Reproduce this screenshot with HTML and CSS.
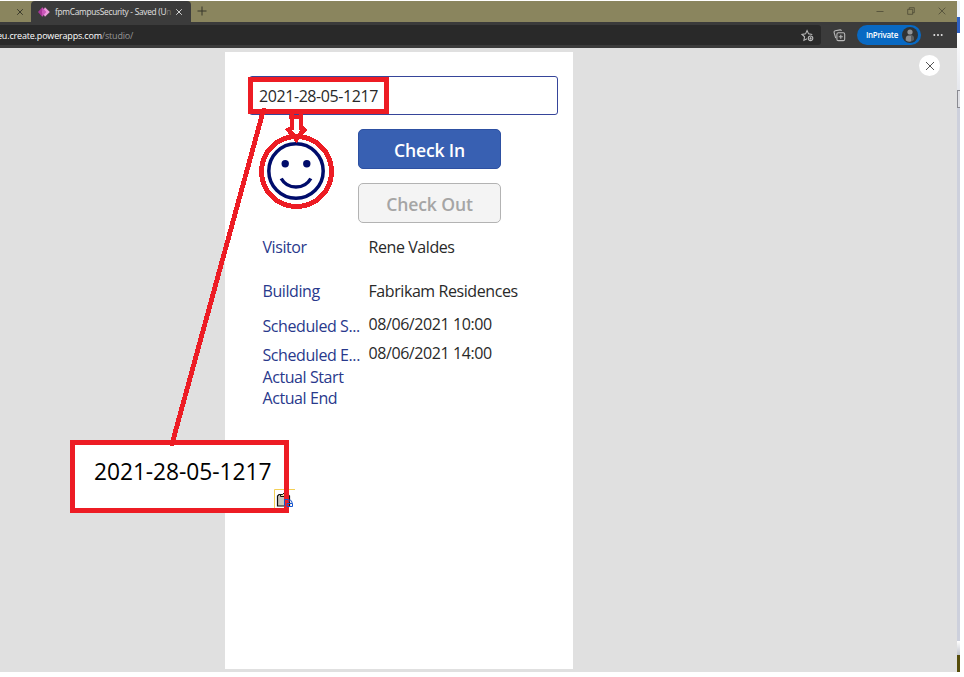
FILE: index.html
```html
<!DOCTYPE html>
<html lang="en">
<head>
<meta charset="utf-8">
<title>fpmCampusSecurity</title>
<link rel="stylesheet" href="styles.css">
</head>
<body>
<div class="desktop">
  <main class="browser">
    <header class="tabs">
      <div class="tab-rest"><svg class="x-small" viewBox="0 0 8 8"><path d="M1.2 1.2l5.6 5.6M6.8 1.2L1.2 6.8"/></svg></div>
      <div class="tab">
        <svg class="logo" viewBox="0 0 12 12"><path fill="#a83598" d="M4.2 1.2L0 6l4.2 4.8L7 6z"/><path fill="#ee9bdc" d="M7 1.2L11.8 6 7 10.8 4.2 6z"/><path fill="#cb58bb" d="M4.2 1.2L8.4 6l-4.2 4.8z"/></svg>
        <span class="tab-title">fpmCampusSecurity - Saved (U<i>n</i></span>
        <svg class="x-small light" viewBox="0 0 8 8"><path d="M1.2 1.2l5.6 5.6M6.8 1.2L1.2 6.8"/></svg>
      </div>
      <svg class="plus" viewBox="0 0 10 10"><path d="M5 .5v9M.5 5h9"/></svg>
      <div class="window-buttons">
        <svg viewBox="0 0 8 8"><path d="M.5 4.5h7"/></svg>
        <svg viewBox="0 0 8 8"><path d="M.7 2.3h5v5h-5zM2.3 2.3V.7h5v5H5.7"/></svg>
        <svg viewBox="0 0 8 8"><path d="M.7.7l6.6 6.6M7.3.7L.7 7.3"/></svg>
      </div>
    </header>
    <div class="toolbar">
      <div class="address">
        <span class="url"><b>eu.create.powerapps.com</b>/studio/</span>
        <svg class="star" viewBox="0 0 12 12"><path d="M5.6 9L2.7 10.5l.6-3.3L1 5l3.2-.5L5.6 1.4 7 4.5l3.4.5"/><circle cx="8.8" cy="8.6" r="2.1"/><path d="M8.8 7.5v2.2M7.7 8.6h2.2"/></svg>
      </div>
      <svg class="collections" viewBox="0 0 12 12"><path d="M2.5 8.5L1 3.2Q.8 2 2 1.7L6.6.8q1-.1 1.2 1"/><rect x="3.6" y="3.5" width="7.2" height="7.2" rx="1.3"/><path d="M7.2 5.2v3.8M5.3 7.1h3.8"/></svg>
      <div class="private"><span>InPrivate</span><svg viewBox="0 0 16 16"><circle cx="8" cy="8" r="8" fill="#303335"/><circle cx="8" cy="5" r="2.6" fill="#929496"/><path fill="#898b8d" d="M3.8 13.4Q3.2 8.8 6.4 8.6h3.2q3 0 2.3 4.4Q8 16.2 3.8 13.4z"/><path fill="#303335" d="M9 9h4v6H9z" opacity=".5"/></svg></div>
      <svg class="more" viewBox="0 0 10 4"><circle cx="1.3" cy="2" r="1"/><circle cx="5" cy="2" r="1"/><circle cx="8.7" cy="2" r="1"/></svg>
    </div>
    <div class="studio">
      <section class="phone">
        <div class="code">2021-28-05-1217</div>
        <div class="actions">
          <svg class="smile" viewBox="0 0 60 60"><circle cx="30" cy="30" r="27.2"/><path d="M15.2 37.5Q20 46 30 46t14.8-8.5"/><circle class="eye" cx="19.2" cy="22.8" r="3.7"/><circle class="eye" cx="40.8" cy="22.8" r="3.7"/></svg>
          <div class="buttons"><button class="check-in">Check In</button><button class="check-out" disabled>Check Out</button></div>
        </div>
        <dl class="details">
          <dt>Visitor</dt><dd>Rene Valdes</dd>
          <dt>Building</dt><dd>Fabrikam Residences</dd>
          <dt>Scheduled S...</dt><dd class="date">08/06/2021 10:00</dd>
          <dt>Scheduled E...</dt><dd class="date">08/06/2021 14:00</dd>
          <dt>Actual Start</dt><dd></dd>
          <dt>Actual End</dt><dd></dd>
        </dl>
      </section>
      <div class="close"><svg viewBox="0 0 10 10"><path d="M1 1l8 8M9 1L1 9"/></svg></div>
    </div>
  </main>
  <aside class="edge"><i class="e1"></i><i class="e2"></i><i class="e3"></i><i class="e4"></i><i class="e5"></i><i class="e6"></i><i class="e7"></i></aside>
</div>
<div class="callout"><span>2021-28-05-1217</span></div>
<svg class="notes" viewBox="0 0 964 677">
  <path d="M274.5 508V489.500H295" fill="none" stroke="#f3cf55"/>
  <path d="M275 490h19v18h-19z" fill="#fff"/>
  <path d="M279 494.500h9l1.500 1.500v10h-12V496z" fill="#cbc7ba" stroke="#111" stroke-width="1.2"/>
  <path d="M280.500 496.500v-2h2l1.500-1.500 1.500 1.500h2v2z" fill="#eee5a5" stroke="#111"/>
  <g fill="none" stroke="#ed1c24" stroke-width="5" shape-rendering="crispEdges">
    <path d="M250.500 79.500h136v32h-136z"/>
    <circle cx="296.500" cy="171.500" r="35" stroke-width="5"/>
    <path d="M263.500 110L172 444" stroke-width="4.800" stroke-linecap="round"/>
    <path d="M72.500 442.500h214v68h-214z"/>
    <path d="M291.500 113v17M300.500 113v17M289 116.500h14" stroke-width="4"/>
    <path d="M287 128l9.500 11 9-11" stroke-width="5"/>
  </g>
  <path d="M284.500 506V499.500h4M289 502v-2h1.500l1.500 2v1.500M287 503.500h5.500v3H287z" fill="none" stroke="#1555d0"/>
</svg>
</body>
</html>
```
FILE: styles.css
```css
* { box-sizing: border-box; }
body { margin: 0; width: 964px; height: 677px; overflow: hidden; background: #fff; font-family: "Open Sans", sans-serif; }
svg { display: block; flex: none; }
.desktop { display: flex; width: 960px; height: 672px; padding-top: 1px; }
.browser { width: 957px; height: 671px; }
.tabs { display: flex; height: 21px; background: #8a855e; }
.tab-rest { width: 31px; padding: 7px 0 0 16px; }
.x-small { width: 8px; height: 8px; fill: none; stroke: #3c3b2c; }
.x-small.light { stroke: #d2d2d2; margin-left: 5px; }
.tab { display: flex; align-items: center; width: 160px; background: #3b3b3b; border-radius: 4px 4px 0 0; padding-left: 7px; }
.logo { width: 12px; height: 12px; }
.tab-title { width: 115px; margin-left: 5px; font-size: 8.3px; letter-spacing: -.27px; line-height: 20px; white-space: nowrap; color: #e2e2e2; }
.tab-title i { font-style: normal; color: #777; }
.plus { width: 10px; height: 10px; margin: 5px 0 0 6px; stroke: #37372b; }
.window-buttons { display: flex; gap: 23px; margin: 6px 11px 0 auto; }
.window-buttons svg { width: 8px; height: 8px; fill: none; stroke: #4c4a36; stroke-width: .8; }
.toolbar { display: flex; align-items: center; height: 26px; background: #3b3b3b; color: #fff; }
.address { display: flex; align-items: center; justify-content: space-between; width: 821px; height: 20px; padding-right: 7px; background: #292929; border-radius: 0 3px 3px 0; font-size: 9px; color: #969696; }
.url { margin-left: -3px; letter-spacing: -.18px; }
.address b { font-weight: 400; color: #fff; }
.star, .collections { width: 13px; height: 13px; fill: none; stroke: #b9b9b9; stroke-width: 1; }
.collections { margin-left: 12px; }
.private { display: flex; align-items: center; justify-content: flex-end; gap: 4px; width: 64px; height: 20px; margin-left: 11px; padding-right: 3px; background: #0869c3; border-radius: 10px; font-size: 8px; font-weight: 600; letter-spacing: -.3px; line-height: 10px; white-space: nowrap; }
.private span { margin-bottom: 1px; }
.private svg { width: 16px; height: 16px; }
.more { width: 10px; height: 4px; margin-left: 12px; fill: #e5e5e5; }
.studio { display: flex; height: 624px; padding: 4px 17px 3px 225px; background: #e0e0e0; justify-content: space-between; }
.phone { width: 348px; height: 617px; background: #fff; padding: 24px 15px 0 24px; }
.code { width: 309px; height: 39px; border: 1.5px solid #36459a; border-radius: 3px; padding-left: 9px; font-size: 16px; letter-spacing: -.42px; line-height: 38px; color: #292929; }
.actions { display: flex; margin-top: 14px; }
.smile { width: 60px; height: 60px; margin: 12px 0 0 17px; fill: none; stroke: #000c6b; stroke-width: 3.5; }
.smile .eye { fill: #000c6b; stroke: none; }
.buttons { display: flex; flex-direction: column; gap: 14px; margin-left: 32px; }
button { width: 143px; height: 40px; padding: 1px 0 0; border: 1px solid #2d50a2; border-radius: 5px; background: #3860b2; font: 600 17.6px "Open Sans", sans-serif; letter-spacing: -.15px; color: #fff; }
.check-out { border-color: #b3b3b3; background: #f4f4f4; color: #a5a5a5; }
.details { display: grid; grid-template-columns: 106px 150px; grid-template-rows: 44px 35px 29px 21.5px 21.5px 21px; margin: 12px 0 0 13.5px; font-size: 16px; letter-spacing: -.42px; line-height: 24px; white-space: nowrap; }
dt { color: #29398c; }
dd { margin: 0; color: #292929; }
.date { margin-top: -2px; }
.close { display: grid; place-items: center; width: 21px; height: 21px; margin-top: 3px; background: #fff; border-radius: 50%; }
.close svg { width: 10px; height: 10px; stroke: #555; }
.edge { display: flex; flex-direction: column; width: 3px; }
.e1 { height: 16px; background: #edf3fb; }
.e2 { height: 16px; background: #2f61c3; }
.e3 { height: 57px; background: linear-gradient(#fff, #e5e7ed); }
.e4 { height: 18px; background: #e0e1e6; border: 1px solid #898a91; border-right: 0; }
.e5 { height: 533px; background: #cdd0dc; }
.e6 { height: 14px; background: linear-gradient(#fff, #c2c5ce); }
.e7 { height: 17px; background: #564d0b; }
.callout { position: absolute; left: 70px; top: 440px; width: 219px; height: 73px; background: #fff; padding: 16px 0 0 24px; font-size: 22.8px; letter-spacing: -.07px; line-height: 32px; color: #000; }
.notes { position: absolute; left: 0; top: 0; width: 964px; height: 677px; }
```
